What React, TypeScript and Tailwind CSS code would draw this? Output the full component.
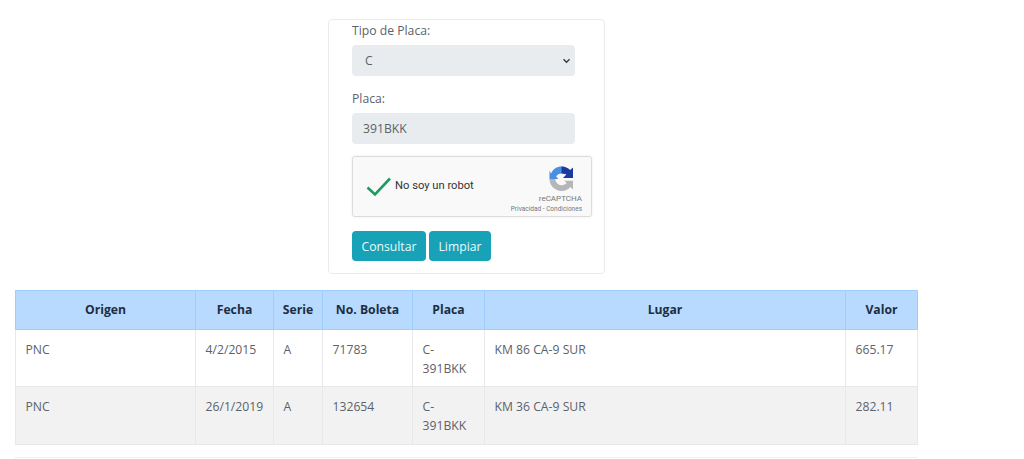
const headers = [
  ["Origen", "w-[180px]"],
  ["Fecha", "w-[78px]"],
  ["Serie", "w-[49px]"],
  ["No. Boleta", "w-[90px]"],
  ["Placa", "w-[72px]"],
  ["Lugar", "w-[361px]"],
  ["Valor", "w-[72px]"],
];
const rows = [
  ["PNC", "4/2/2015", "A", "71783", "C-391BKK", "KM 86 CA-9 SUR", "665.17", "h-[57px]"],
  ["PNC", "26/1/2019", "A", "132654", "C-391BKK", "KM 36 CA-9 SUR", "282.11", "h-[58px]"],
];

function Recaptcha() {
  return (
    <svg width="26" height="27" viewBox="0 0 26 27" className="block">
      <path d="M3 8.5C5 4 9 1.5 13.5 1.5c1.5 0 3 .3 4.5.9L17 9.5c-1-.6-2.2-.9-3.5-.9-2.4 0-4.2 1.2-5.4 3L10.5 14H1.5V5.5z" fill="#4a90e2" />
      <path d="M13.5 1.5c3.5 0 6.5 1.4 8.6 3.6L25 2.5V13h-10l3.4-3.4c-1.2-.7-3-1-4.9-1z" fill="#1c3a9e" />
      <path d="M1.5 14h5.8c.2 3.5 3 6.2 6.5 6.2 2 0 3.6-.8 4.8-2.1l-2.3-2.3h8.7v8.7l-2.6-2.5c-2.3 2.5-5.3 3.9-8.8 3.9C7 25.9 1.5 20.6 1.5 14z" fill="#b4b6b8" />
    </svg>
  );
}

export default function App() {
  return (
    <div className="h-[459px] w-[1024px] overflow-hidden bg-white font-['Open_Sans','Noto_Sans',sans-serif] text-[12.2px] text-[#5b6269]">
      <div className="flex flex-col pl-[15px] pt-[19px]">
        <div className="ml-[313px] h-[255px] w-[277px] rounded border border-[#eaebec] pl-[23px]">
          <div className="pt-[1px] leading-[20px]">Tipo de Placa:</div>
          <div className="mt-[4px] flex h-[31px] w-[223px] items-center justify-between rounded bg-[#e9ecef] pl-[13px] pr-[4px]">
            <span className="pt-[2px]">C</span>
            <svg width="9" height="6" viewBox="0 0 10 7" fill="none" stroke="#343a40" strokeWidth="1.6" className="block">
              <path d="M1.5 1.5 5 5l3.5-3.5" />
            </svg>
          </div>
          <div className="mt-[12px] pt-[1px] leading-[20px]">Placa:</div>
          <div className="mt-[4px] flex h-[31px] w-[223px] items-center rounded bg-[#e9ecef] pl-[11px] pt-[2px]">391BKK</div>
          <div className="mt-[12px] flex h-[61px] w-[240px] items-center rounded-[3px] border border-[#dcdcdc] bg-[#f9f9f9] shadow-[0_0_3px_rgba(0,0,0,0.08)]">
            <svg width="26" height="20" viewBox="0 0 26 20" fill="none" stroke="#1e9b62" strokeWidth="2.6" className="ml-[13px] block">
              <path d="M1.5 10.5 9 17.5 24 1.5" />
            </svg>
            <span className="ml-[3px] font-['Roboto',sans-serif] text-[11.2px] text-[#333333]">No soy un robot</span>
            <div className="ml-auto flex flex-col items-end pr-[9px] pt-[5px] font-['Roboto',sans-serif] text-[#777777]">
              <div className="pr-[8px]">
                <Recaptcha />
              </div>
              <span className="mt-[1px] text-[8px] leading-[11px]">reCAPTCHA</span>
              <span className="whitespace-nowrap text-[6.5px] leading-[10px]">Privacidad - Condiciones</span>
            </div>
          </div>
          <div className="mt-[14px] flex gap-[3px]">
            <div className="flex h-[30px] w-[74px] items-center justify-center rounded bg-[#17a2b8] pt-[2px] text-[#eafafc]">Consultar</div>
            <div className="flex h-[30px] w-[62px] items-center justify-center rounded bg-[#17a2b8] pt-[2px] text-[#eafafc]">Limpiar</div>
          </div>
        </div>

        <table className="mt-[16px] w-[902px] table-fixed border-collapse">
          <thead>
            <tr className="bg-[#b8daff]">
              {headers.map(([h, w]) => (
                <th key={h} className={`${w} h-[39px] border border-[#9fcdff] pt-[1px] text-center font-bold text-[#1d2d42]`}>
                  {h}
                </th>
              ))}
            </tr>
          </thead>
          <tbody>
            {rows.map((row, i) => (
              <tr key={i} className={i === 1 ? "bg-[#f2f2f2]" : "bg-white"}>
                {row.slice(0, 7).map((c, j) => (
                  <td key={j} className={`${row[7]} border border-[#e6e8ea] px-[9.5px] pb-[8px] pt-[10px] align-top leading-[19px]`}>
                    {c}
                  </td>
                ))}
              </tr>
            ))}
          </tbody>
        </table>
        <div className="mt-[12px] h-px w-[903px] bg-[#eeeeee]" />
      </div>
    </div>
  );
}
